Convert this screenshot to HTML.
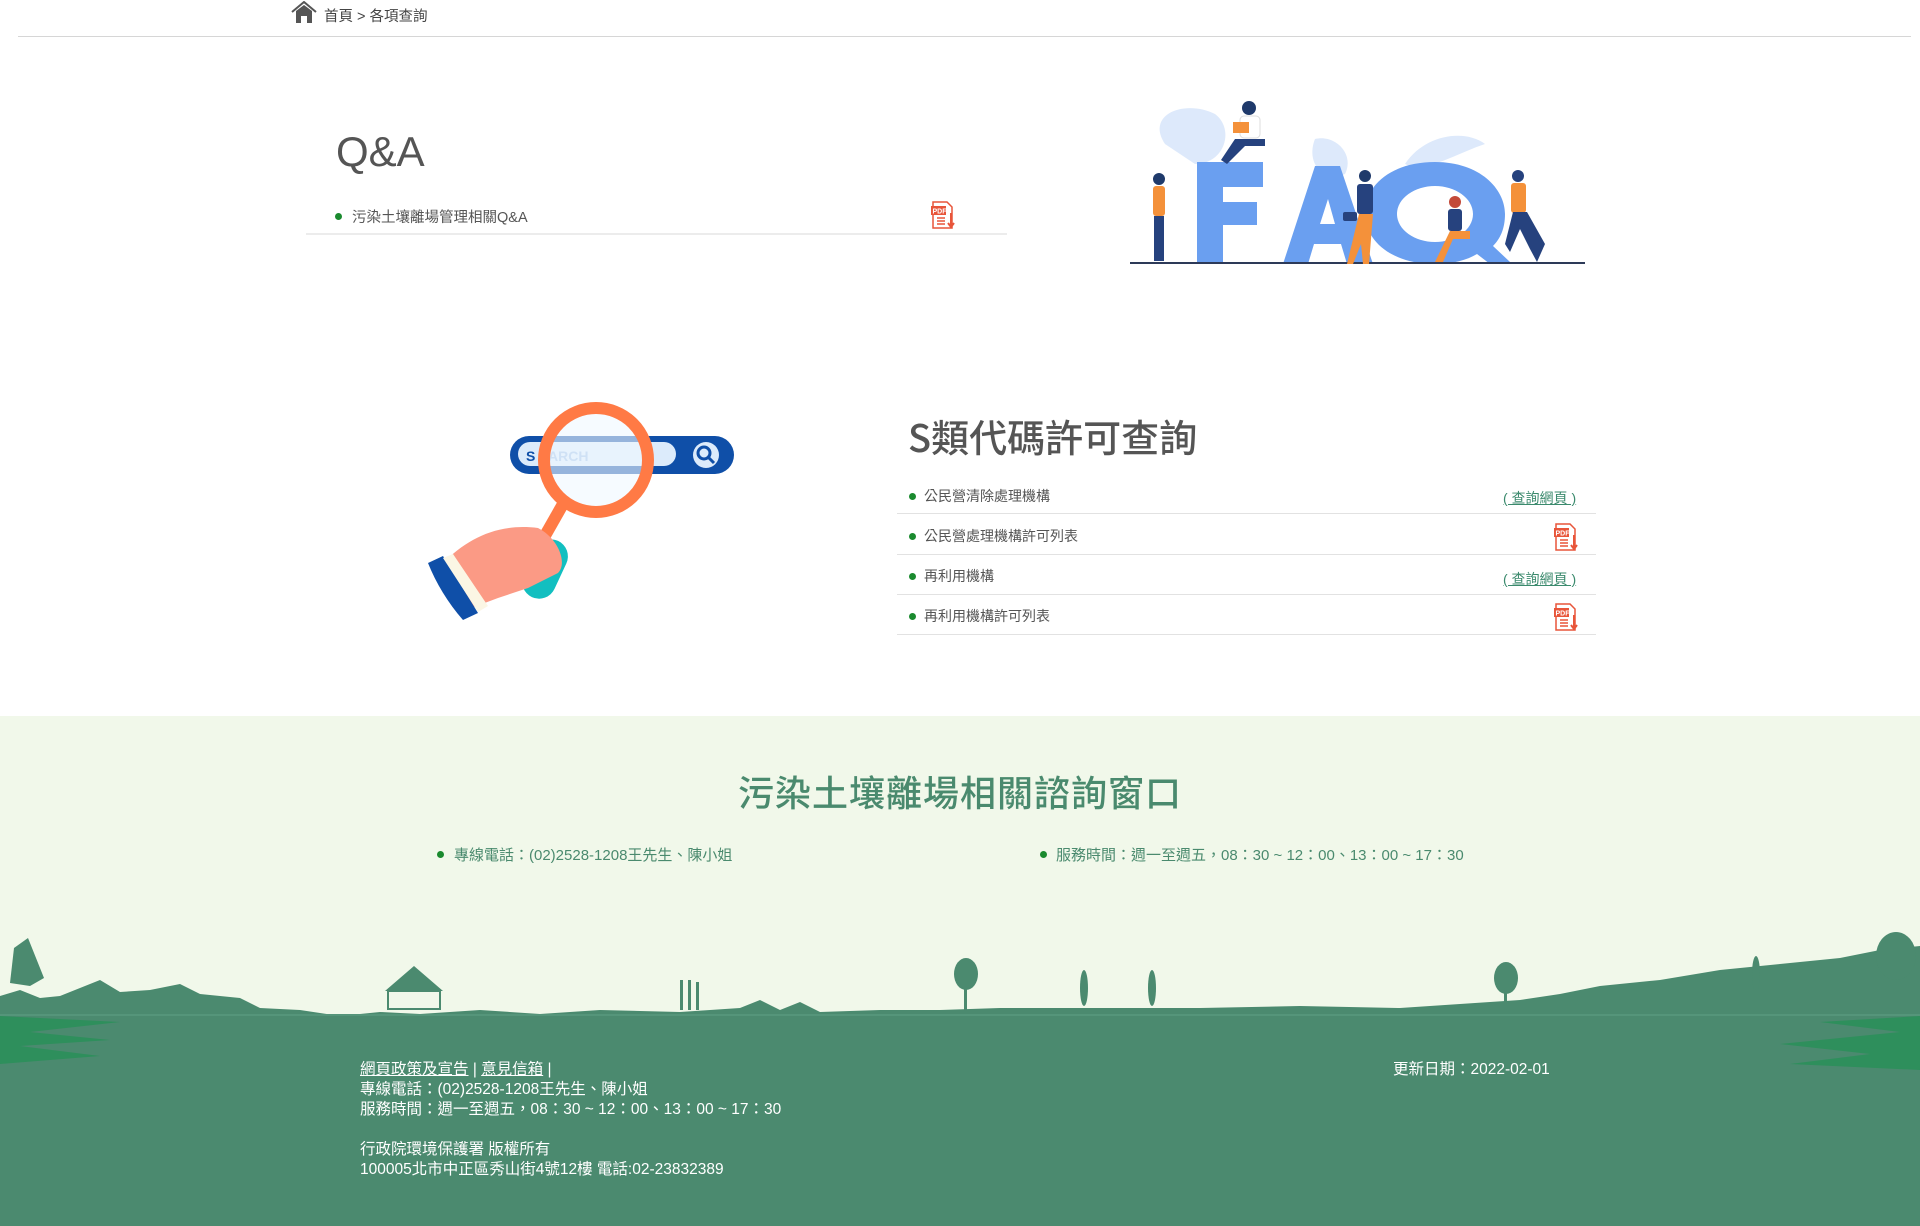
<!DOCTYPE html>
<html><head><meta charset="utf-8"><style>
*{margin:0;padding:0;box-sizing:border-box}
body{width:1920px;height:1226px;position:relative;background:#fff;font-family:"Liberation Sans","Noto Sans CJK TC",sans-serif;color:#555;overflow:hidden}
.a{position:absolute}
.bul{position:absolute;width:7px;height:7px;border-radius:50%;background:#1a8a2e}
.item{position:absolute;font-size:14px;color:#555;white-space:nowrap}
.line{position:absolute;height:1px;background:#e2e2e2}
.lnk{position:absolute;font-size:14px;color:#3b8a6d;text-decoration:underline;white-space:nowrap}
.ft{position:absolute;color:#fff;font-size:15.5px;line-height:20px;white-space:nowrap}
</style></head><body>
<svg class="a" style="left:291px;top:1px" width="26" height="22" viewBox="0 0 26 22"><path d="M1 11 L13 1 L25 11" fill="none" stroke="#555" stroke-width="2"/><path d="M5 10 L13 4 L21 10 V22 H16 V15 H10 V22 H5Z" fill="#555"/></svg>
<div class="a" style="left:324px;top:5px;font-size:14.5px;color:#444">首頁 &gt; 各項查詢</div>
<div class="line" style="left:18px;top:36px;width:1893px;background:#d6d6d6"></div>

<div class="a" style="left:336px;top:128px;font-size:42px;color:#555">Q&amp;A</div>
<div class="bul" style="left:335px;top:213px"></div>
<div class="item" style="left:352px;top:206px;font-size:14.5px">污染土壤離場管理相關Q&amp;A</div>
<svg class="a" style="left:930px;top:201px" width="26" height="28" viewBox="0 0 26 28"><path d="M3 1H17L22 6V27H3Z" fill="#fff" stroke="#e8553a" stroke-width="1.5"/><rect x="1" y="5" width="15" height="9" fill="#e8553a"/><text x="2.5" y="12.5" font-size="7" fill="#fff" font-family="Liberation Sans" font-weight="bold">PDF</text><path d="M7 17H15M7 20H15M7 23H15" stroke="#e8553a" stroke-width="1.5"/><path d="M21 12V25M18 22L21 26L24 22" stroke="#e8553a" stroke-width="2" fill="none"/></svg>
<div class="line" style="left:306px;top:233px;width:701px;background:#ececec;height:2px"></div>

<svg class="a" style="left:1125px;top:94px" width="465" height="172" viewBox="0 0 465 172">
<path d="M40 50 C20 20 60 5 90 20 C110 35 100 70 70 70Z" fill="#dde9fb"/>
<path d="M280 70 C300 40 340 35 360 50 C330 60 300 80 280 70Z" fill="#dde9fb"/>
<path d="M190 45 C210 40 230 60 220 80 C200 90 180 70 190 45Z" fill="#dde9fb"/>
<path d="M72 68 H138 V93 H98 V108 H132 V131 H98 V170 H72Z" fill="#6a9ff0"/>
<path d="M158 170 L190 72 H215 L248 170 H222 L216 150 H189 L183 170Z M195 130 H210 L203 105Z" fill="#6a9ff0"/>
<path d="M310 68 C355 68 380 95 380 120 C380 135 375 145 368 152 L385 168 L365 170 L352 160 C342 166 328 170 310 170 C268 170 240 148 240 119 C240 90 268 68 310 68Z M310 92 C290 92 272 104 272 120 C272 136 290 148 310 148 C330 148 348 136 348 120 C348 104 330 92 310 92Z" fill="#6a9ff0"/>
<rect x="5" y="168" width="455" height="2" fill="#2d3a58"/>
<circle cx="34" cy="85" r="6" fill="#1f3a6b"/><rect x="28" y="92" width="12" height="30" rx="3" fill="#f4913a"/><rect x="29" y="122" width="10" height="45" fill="#26427e"/>
<circle cx="124" cy="14" r="7" fill="#1f3a6b"/><rect x="115" y="22" width="20" height="22" rx="4" fill="#fff" stroke="#ddd"/><rect x="108" y="28" width="16" height="11" fill="#f4913a"/><path d="M110 45 H140 V52 H120 L102 70 L96 66Z" fill="#26427e"/>
<circle cx="240" cy="82" r="6" fill="#1f3a6b"/><rect x="232" y="90" width="16" height="30" rx="3" fill="#26427e"/><path d="M234 120 H248 L244 170 H238 L236 150 L228 170 H222Z" fill="#f4913a"/><rect x="218" y="118" width="14" height="9" rx="2" fill="#26427e"/>
<circle cx="330" cy="108" r="6" fill="#c34a3a"/><rect x="323" y="115" width="14" height="22" rx="3" fill="#26427e"/><path d="M325 137 H345 V145 H328 L318 168 H310Z" fill="#f4913a"/>
<circle cx="393" cy="82" r="6" fill="#26427e"/><rect x="386" y="89" width="15" height="30" rx="3" fill="#f4913a"/><path d="M388 118 H402 L420 150 L412 168 L405 155 L395 135 L385 158 L380 150Z" fill="#26427e"/>
</svg>

<svg class="a" style="left:418px;top:398px" width="320" height="230" viewBox="0 0 320 230">
<rect x="92" y="38" width="224" height="38" rx="19" fill="#0f4fa8"/>
<rect x="100" y="44" width="158" height="24" rx="12" fill="#dcebfb"/>
<circle cx="288" cy="57" r="13" fill="#dcebfb"/><circle cx="286" cy="55" r="6" fill="none" stroke="#0f4fa8" stroke-width="3"/><path d="M290 59 L296 65" stroke="#0f4fa8" stroke-width="3"/>
<text x="108" y="63" font-family="Liberation Sans" font-weight="bold" font-size="14" fill="#0f4fa8">S</text>
<text x="130" y="63" font-family="Liberation Sans" font-weight="bold" font-size="14" fill="#9dbde6">ARCH</text>
<circle cx="178" cy="62" r="52" fill="rgba(240,248,255,0.6)" stroke="#ff7a45" stroke-width="12"/>
<path d="M145 106 L120 150" stroke="#ff7a45" stroke-width="12"/>
<rect x="110" y="140" width="34" height="62" rx="17" transform="rotate(25 127 171)" fill="#12bfc0"/>
<path d="M25 165 C50 140 80 125 120 130 C140 140 150 165 140 175 L110 190 L80 200 L40 215Z" fill="#fb9a85"/>
<path d="M10 165 L25 158 L60 215 L45 222 C30 205 18 185 10 165Z" fill="#0f4fa8"/>
<path d="M25 160 L35 156 L70 208 L60 214Z" fill="#fbf6e4"/>
</svg>

<div class="a" style="left:908px;top:408px;font-size:38px;color:#555;font-weight:500;font-family:'Noto Sans CJK TC','Liberation Sans',sans-serif">S類代碼許可查詢</div>
<div class="bul" style="left:909px;top:493px"></div><div class="item" style="left:924px;top:486px">公民營清除處理機構</div>
<div class="lnk" style="left:1503px;top:488px">(&nbsp;查詢網頁&nbsp;)</div>
<div class="line" style="left:897px;top:513px;width:699px"></div>
<div class="bul" style="left:909px;top:533px"></div><div class="item" style="left:924px;top:526px">公民營處理機構許可列表</div>
<svg class="a" style="left:1553px;top:523px" width="26" height="28" viewBox="0 0 26 28"><path d="M3 1H17L22 6V27H3Z" fill="#fff" stroke="#e8553a" stroke-width="1.5"/><rect x="1" y="5" width="15" height="9" fill="#e8553a"/><text x="2.5" y="12.5" font-size="7" fill="#fff" font-family="Liberation Sans" font-weight="bold">PDF</text><path d="M7 17H15M7 20H15M7 23H15" stroke="#e8553a" stroke-width="1.5"/><path d="M21 12V25M18 22L21 26L24 22" stroke="#e8553a" stroke-width="2" fill="none"/></svg>
<div class="line" style="left:897px;top:554px;width:699px"></div>
<div class="bul" style="left:909px;top:573px"></div><div class="item" style="left:924px;top:566px">再利用機構</div>
<div class="lnk" style="left:1503px;top:569px">(&nbsp;查詢網頁&nbsp;)</div>
<div class="line" style="left:897px;top:594px;width:699px"></div>
<div class="bul" style="left:909px;top:613px"></div><div class="item" style="left:924px;top:606px">再利用機構許可列表</div>
<svg class="a" style="left:1553px;top:603px" width="26" height="28" viewBox="0 0 26 28"><path d="M3 1H17L22 6V27H3Z" fill="#fff" stroke="#e8553a" stroke-width="1.5"/><rect x="1" y="5" width="15" height="9" fill="#e8553a"/><text x="2.5" y="12.5" font-size="7" fill="#fff" font-family="Liberation Sans" font-weight="bold">PDF</text><path d="M7 17H15M7 20H15M7 23H15" stroke="#e8553a" stroke-width="1.5"/><path d="M21 12V25M18 22L21 26L24 22" stroke="#e8553a" stroke-width="2" fill="none"/></svg>
<div class="line" style="left:897px;top:634px;width:699px"></div>

<div class="a" style="left:0;top:716px;width:1920px;height:510px;background:#f1f8ea"></div>
<div class="a" style="left:0;top:765px;width:1920px;text-align:center;font-size:36px;font-weight:500;color:#4a8a6e;letter-spacing:1px;font-family:'Noto Sans CJK TC','Liberation Sans',sans-serif">污染土壤離場相關諮詢窗口</div>
<div class="bul" style="left:437px;top:851px"></div><div class="item" style="left:454px;top:844px;color:#4a8a6e;font-size:15px">專線電話：(02)2528-1208王先生、陳小姐</div>
<div class="bul" style="left:1040px;top:851px"></div><div class="item" style="left:1056px;top:844px;color:#4a8a6e;font-size:15px">服務時間：週一至週五，08：30 ~ 12：00、13：00 ~ 17：30</div>

<svg class="a" style="left:0;top:928px" width="1920" height="298" viewBox="0 0 1920 298">
<path d="M0 68 L20 62 L40 70 L60 68 L80 60 L100 52 L120 64 L150 62 L180 56 L200 66 L240 70 L260 80 L300 82 L340 88 L380 84 L420 86 L480 82 L540 86 L600 82 L680 84 L740 80 L760 72 L780 82 L800 74 L820 84 L880 82 L940 82 L1000 80 L1100 80 L1200 80 L1300 78 L1400 80 L1460 76 L1520 72 L1560 66 L1600 58 L1660 52 L1720 42 L1780 36 L1840 30 L1880 22 L1920 18 V298 H0Z" fill="#4b8a6f"/>
<path d="M10 55 L14 20 L28 10 L36 30 L44 50 L30 58Z" fill="#4b8a6f"/>
<path d="M385 63 L414 38 L443 63Z" fill="#4b8a6f"/><rect x="388" y="63" width="52" height="18" fill="none" stroke="#4b8a6f" stroke-width="2"/>
<rect x="680" y="52" width="3" height="30" fill="#4b8a6f"/><rect x="688" y="52" width="3" height="30" fill="#4b8a6f"/><rect x="696" y="54" width="3" height="28" fill="#4b8a6f"/>
<ellipse cx="966" cy="46" rx="12" ry="16" fill="#4b8a6f"/><rect x="964" y="50" width="3" height="32" fill="#4b8a6f"/>
<ellipse cx="1084" cy="60" rx="4" ry="18" fill="#4b8a6f"/><ellipse cx="1152" cy="60" rx="4" ry="18" fill="#4b8a6f"/>
<ellipse cx="1506" cy="50" rx="12" ry="16" fill="#4b8a6f"/><rect x="1504" y="55" width="3" height="25" fill="#4b8a6f"/>
<ellipse cx="1756" cy="46" rx="4" ry="18" fill="#4b8a6f"/>
<ellipse cx="1896" cy="28" rx="20" ry="24" fill="#4b8a6f"/>
<rect x="0" y="86" width="1920" height="2" fill="#55957a"/>
<path d="M0 88 L120 94 L30 104 L110 112 L20 118 L100 128 L0 136Z" fill="#2e8f5c"/>
<path d="M1920 88 L1820 94 L1900 104 L1780 116 L1870 126 L1790 136 L1920 142Z" fill="#2e8f5c"/>
</svg>

<div class="ft" style="left:360px;top:1060px"><span style="text-decoration:underline">網頁政策及宣告</span> | <span style="text-decoration:underline">意見信箱</span> |<br>專線電話：(02)2528-1208王先生、陳小姐<br>服務時間：週一至週五，08：30 ~ 12：00、13：00 ~ 17：30<br><br>行政院環境保護署 版權所有<br>100005北市中正區秀山街4號12樓 電話:02-23832389</div>
<div class="ft" style="left:1393px;top:1060px">更新日期：2022-02-01</div>
</body></html>
